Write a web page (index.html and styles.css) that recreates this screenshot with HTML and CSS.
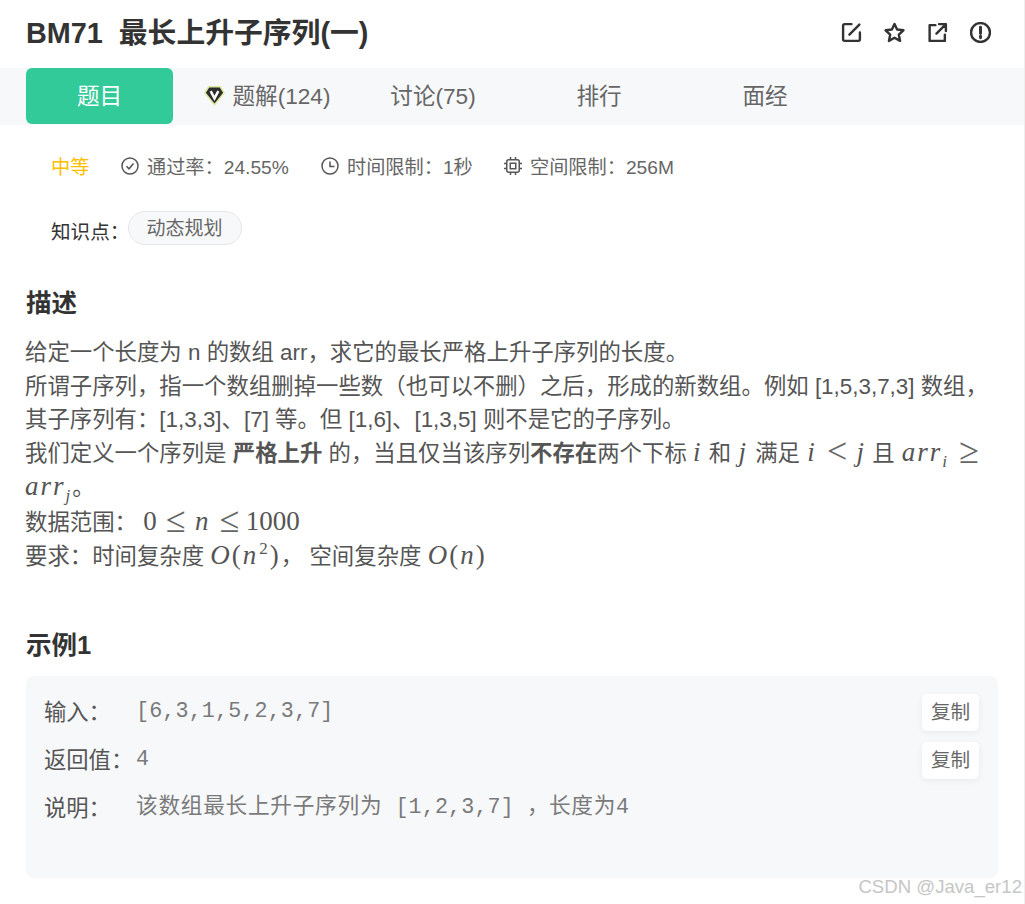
FILE: index.html
```html
<!DOCTYPE html>
<html lang="zh">
<head>
<meta charset="utf-8">
<title>BM71 最长上升子序列(一)</title>
<link rel="stylesheet" href="styles.css">
</head>
<body>
<div class="page">
  <header class="head">
    <h1 class="title">BM71&nbsp; 最长上升子序列(一)</h1>
    <div class="actions">
      <svg class="act" viewBox="0 0 20 20"><path d="M10 2H3.500A1.500 1.500 0 0 0 2 3.500V16.500A1.500 1.500 0 0 0 3.500 18H16.500A1.500 1.500 0 0 0 18 16.500V10M8 12L17.500 2.500"/></svg>
      <svg class="act" viewBox="0 0 20 20"><path d="M10 1.800L12.500 7.200L18.500 7.900L14.100 12L15.300 18L10 15L4.700 18L5.900 12L1.500 7.900L7.500 7.200Z"/></svg>
      <svg class="act" viewBox="0 0 20 20"><path d="M8 3H2.500V18H17V12M11.500 2H18V8.500M18 2L9 11"/></svg>
      <svg class="act" viewBox="0 0 20 20"><circle cx="10" cy="10" r="9"/><path class="bold" d="M10 5V11M10 13.500V15"/></svg>
    </div>
  </header>
  <nav class="tabs">
    <a class="tab active">题目</a>
    <a class="tab"><svg class="vip" viewBox="0 0 22 22"><path class="vip-edge" d="M4.500 1H17.500L22 8L11 22L0 8Z"/><path class="vip-body" d="M5.500 2.500H16.500L20 8L11 19.500L2 8Z"/><path class="vip-v" d="M7 6.500L11 14L15 6.500"/></svg>题解(124)</a>
    <a class="tab">讨论(75)</a>
    <a class="tab">排行</a>
    <a class="tab">面经</a>
  </nav>
  <div class="meta">
    <span class="level">中等</span>
    <span class="stat pass"><svg class="mi" viewBox="0 0 18 18"><circle cx="9" cy="9" r="8"/><path d="M5.500 9.300L8 11.800L12.500 6.500"/></svg>通过率：24.55%</span>
    <span class="stat time"><svg class="mi" viewBox="0 0 18 18"><circle cx="9" cy="9" r="8"/><path d="M9 4.500V9.500H13.500"/></svg>时间限制：1秒</span>
    <span class="stat"><svg class="mi" viewBox="0 0 18 18"><rect x="2.750" y="2.750" width="12.500" height="12.500" rx="2"/><rect x="6.250" y="6.250" width="5.500" height="5.500"/><path d="M6.500 0V2.750M11.500 0V2.750M6.500 15.250V18M11.500 15.250V18M0 6.500H2.750M0 11.500H2.750M15.250 6.500H18M15.250 11.500H18"/></svg>空间限制：256M</span>
  </div>
  <div class="know"><span class="know-label">知识点：</span><span class="chip">动态规划</span></div>
  <main class="content">
    <h2 class="h-desc">描述</h2>
    <div class="desc">
      <p>给定一个长度为 n 的数组 arr，求它的最长严格上升子序列的长度。</p>
      <p>所谓子序列，指一个数组删掉一些数（也可以不删）之后，形成的新数组。例如 [1,5,3,7,3] 数组，</p>
      <p>其子序列有：[1,3,3]、[7] 等。但 [1,6]、[1,3,5] 则不是它的子序列。</p>
      <p>我们定义一个序列是 <b>严格上升</b> 的，当且仅当该序列<b>不存在</b>两个下标 <i class="m">i</i> 和 <i class="m wide">j</i> 满足 <i class="m wide">i</i> <span class="rel">&lt;</span> <i class="m">j</i> 且 <i class="m wide">arr<sub>i</sub></i> <span class="rel">≥</span></p>
      <p class="tall"><i class="m">arr<sub>j</sub></i>。</p>
      <p>数据范围： <span class="m num">0</span> <span class="rel">≤</span> <i class="m">n</i> <span class="rel last">≤</span> <span class="m num">1000</span></p>
      <p>要求：时间复杂度 <span class="m"><i>O</i>(<i>n</i><sup>2</sup>)</span>， 空间复杂度 <span class="m"><i>O</i>(<i>n</i>)</span></p>
    </div>
    <h2 class="h-ex">示例1</h2>
    <section class="example">
      <div class="row"><span class="label">输入：</span><span class="code">[6,3,1,5,2,3,7]</span><button class="copy">复制</button></div>
      <div class="row"><span class="label">返回值：</span><span class="code">4</span><button class="copy">复制</button></div>
      <div class="row"><span class="label">说明：</span><span class="code"><span class="code-cjk">该数组最长上升子序列为</span> [1,2,3,7] ，<span class="code-cjk">长度为</span>4</span></div>
    </section>
  </main>
  <div class="mark">CSDN @Java_er12</div>
</div>
</body>
</html>
```
FILE: styles.css
```css
* { box-sizing: border-box; }
html, body { margin: 0; padding: 0; }
body {
  background: #fff;
  color: #555;
  font-family: "Liberation Sans", "Noto Sans CJK SC", sans-serif;
}
.page { position: relative; width: 1025px; height: 904px; overflow: hidden; border-right: 1px solid #eee; }
.head { height: 68px; padding: 0 33px 0 26px; display: flex; align-items: center; justify-content: space-between; }
.title { margin: -7px 0 0; font-size: 28.800px; font-weight: 700; color: #333; }
.actions { display: flex; gap: 22px; margin-top: -4px; }
.act { width: 21px; height: 21px; fill: none; stroke: #333; stroke-width: 2.300; stroke-linejoin: round; stroke-linecap: round; }
.act .bold { stroke-width: 2.800; }
.tabs { height: 57px; padding-left: 26px; background: #f7f8fa; display: flex; }
.tab { width: 166px; height: 56px; padding-bottom: 4px; display: flex; align-items: center; justify-content: center; gap: 8px; font-size: 22.600px; color: #666; }
.tab.active { width: 147px; background: #32ca99; color: #fff; border-radius: 6px; margin-right: 11px; }
.vip { width: 21px; height: 21px; margin-top: 3px; }
.vip-edge { fill: #dfe8a0; }
.vip-body { fill: #2d2d2d; }
.vip-v { fill: none; stroke: #fff; stroke-width: 2.600; }
.meta { height: 84px; padding: 0 0 2px 51px; display: flex; align-items: center; font-size: 19.200px; color: #666; }
.level { color: #ffbe00; width: 70px; }
.stat { display: flex; align-items: center; gap: 8px; }
.pass { width: 200px; }
.time { width: 183px; }
.mi { width: 18px; height: 18px; fill: none; stroke: #555; stroke-width: 1.500; }
.know { height: 34px; margin-top: 2px; padding-left: 51px; display: flex; align-items: center; font-size: 19.600px; }
.know-label { color: #333; width: 77px; margin-top: 5px; white-space: nowrap; }
.chip { height: 34px; width: 114px; padding: 0 1px 4px 0; border: 1px solid #e5e6ea; border-radius: 17px; background: #f7f8fa; color: #666; font-size: 19px; display: flex; align-items: center; justify-content: center; }
.content { padding: 0 26px 0 25px; }
.h-desc { margin: 41px 0 0 1px; font-size: 25.500px; line-height: 34px; color: #333; }
.desc { margin-top: 16px; font-size: 22.400px; color: #555; }
.desc p { margin: 0; height: 33.700px; line-height: 33.700px; white-space: nowrap; }
.desc p.tall { margin-bottom: 2px; }
.m { font-family: "Liberation Serif", serif; font-size: 27px; line-height: 0; letter-spacing: 2px; }
.wide { margin: 0 1px; }
.num { letter-spacing: 0; }
.rel { font-family: "Liberation Serif", serif; font-size: 36px; line-height: 0; vertical-align: -2px; margin: 0 3px; color: #666; }
.rel.last { margin-right: 0; }
.m sub, .m sup { font-size: 17px; line-height: 0; }
.m sup { margin-left: 1px; }
.h-ex { margin: 54px 0 0 1px; font-size: 25.500px; line-height: 34px; color: #333; }
.example { margin: 14px 0 0 1px; height: 202px; padding: 20px 19px 0 18px; background: #f7f8fa; border-radius: 8px; }
.row { height: 48px; display: flex; align-items: flex-start; }
.label { width: 92px; font-size: 22.300px; line-height: 34px; color: #555; white-space: nowrap; }
.code { flex: 1; font-family: "Liberation Mono", "Noto Sans CJK SC", monospace; font-size: 21.700px; line-height: 32px; letter-spacing: .15px; color: #7a7a7a; white-space: pre; }
.code-cjk { letter-spacing: .7px; }
.copy { width: 57px; height: 37px; margin-top: -2px; padding: 0 0 3px; border: 0; border-radius: 5px; background: #fff; box-shadow: 0 2px 6px rgba(0,0,0,.06); font-family: inherit; font-size: 19.600px; color: #666; }
.mark { position: absolute; right: 2px; top: 875px; font-size: 18.600px; line-height: 24px; color: #c6c6c6; }
```
